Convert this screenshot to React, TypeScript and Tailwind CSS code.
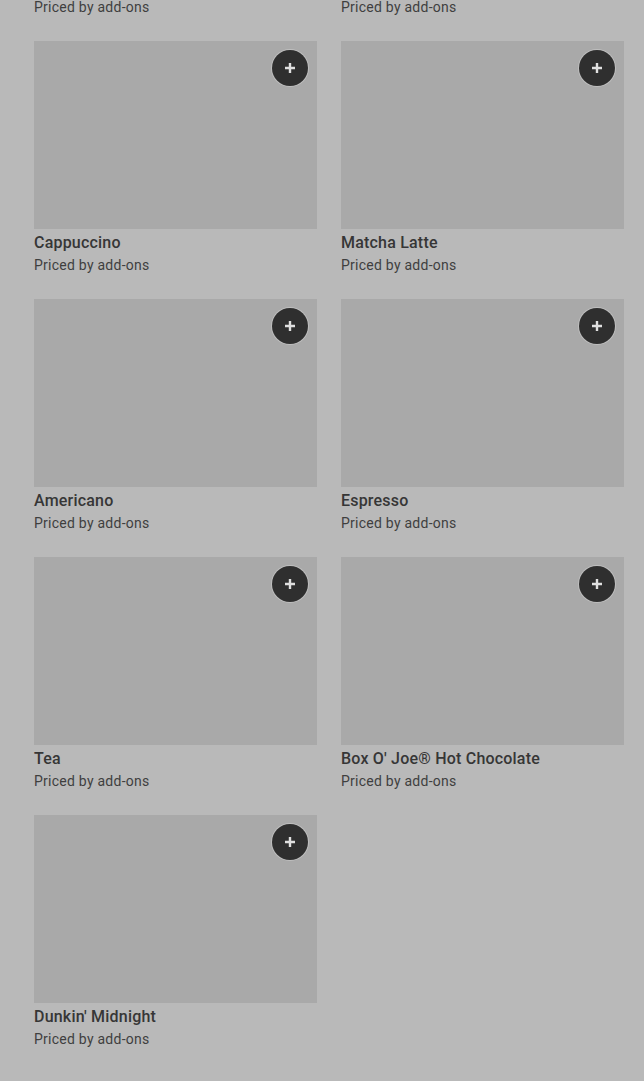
import React from "react";

const items = [
  "Cappuccino",
  "Matcha Latte",
  "Americano",
  "Espresso",
  "Tea",
  "Box O' Joe® Hot Chocolate",
  "Dunkin' Midnight",
];

function Card({ name }: { name: string }) {
  return (
    <div className="flex flex-col">
      <div className="relative h-[188px] bg-[#a9a9a9]">
        <button className="absolute right-[9px] top-[9px] flex h-9 w-9 items-center justify-center rounded-full bg-[#2f2f2f] shadow-[0_0_0_1px_rgba(255,255,255,0.25)]">
          <svg width="12" height="12" viewBox="0 0 12 12">
            <path d="M6 1v10M1 6h10" stroke="#e0e0e0" strokeWidth="2.4" />
          </svg>
        </button>
      </div>
      <div className="mt-[2px] text-[16px] font-medium leading-6 tracking-[0.2px] text-[#363636]">{name}</div>
      <div className="text-[14px] leading-5 tracking-[0.25px] text-[#3f3f3f]">Priced by add-ons</div>
    </div>
  );
}

export default function App() {
  return (
    <div
      className="min-h-[1081px] bg-[#b9b9b9] pl-[34px] pb-8"
      style={{ fontFamily: "Roboto, 'Noto Sans', sans-serif" }}
    >
      <div className="grid grid-cols-[283px_283px] gap-x-6 gap-y-6">
        <div className="-mt-[3px] text-[14px] leading-5 tracking-[0.25px] text-[#3f3f3f]">Priced by add-ons</div>
        <div className="-mt-[3px] text-[14px] leading-5 tracking-[0.25px] text-[#3f3f3f]">Priced by add-ons</div>
        {items.map((n) => (
          <Card key={n} name={n} />
        ))}
      </div>
    </div>
  );
}
